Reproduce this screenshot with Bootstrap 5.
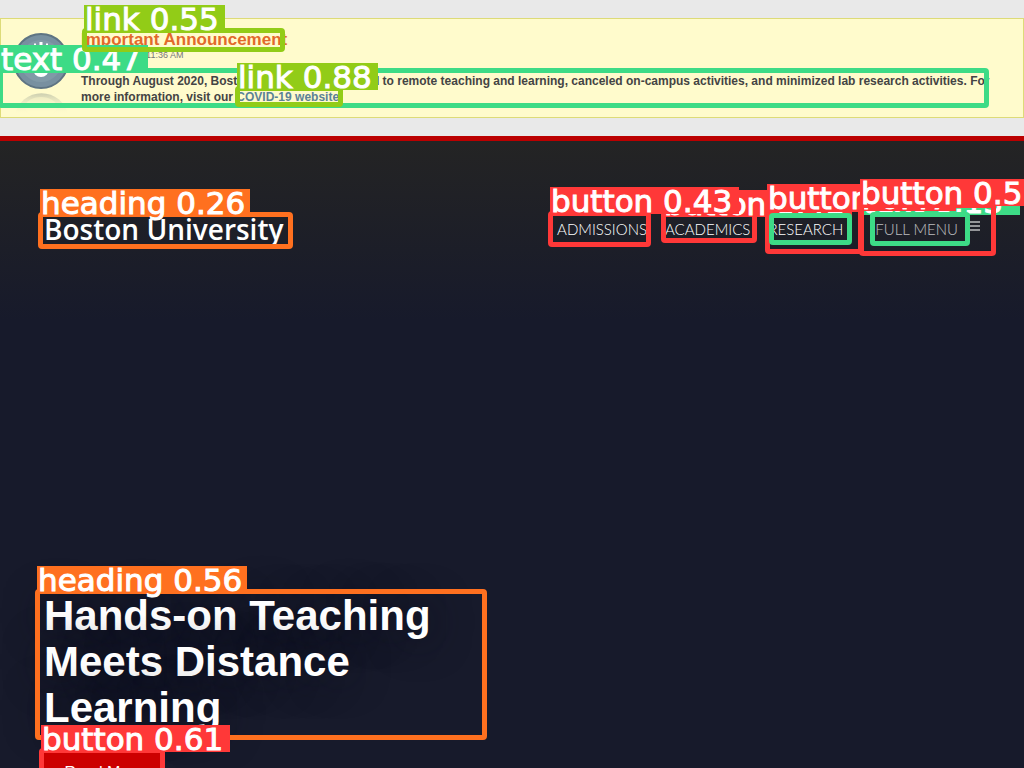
<!DOCTYPE html>
<html lang="en">
<head>
<meta charset="utf-8">
<meta name="viewport" content="width=device-width, initial-scale=1">
<title>Boston University</title>
<link href="https://cdn.jsdelivr.net/npm/bootstrap@5.3.0/dist/css/bootstrap.min.css" rel="stylesheet">
<style>
body { font-family: "Liberation Sans", Arial, sans-serif; background: #e9e9e9; }
.page { height: 100vh; min-height: 600px; }
.notice { margin: 18px 0; padding: 12px 32px 12px 12px; background: #fffbcc; border: 1px solid #dddb78; color: #444; gap: 12px; height: 100px; }
.notice h2 { font-size: 17px; line-height: 18px; font-weight: 700; margin: 0; }
.notice h2 a { color: #e2692a; }
.notice time { font-size: 9px; line-height: 12px; color: #777; margin-bottom: 12px; }
.notice p { font-size: 12px; line-height: 16px; font-weight: 700; }
.notice p a { color: #5b8296; }
.seal { width: 56px; height: 86px; }
.hero { border-top: 5px solid #bb0000; background: linear-gradient(#242424, #171a2b 180px); padding: 0 44px; color: #fff; }
.brand-name { font: 600 28px/36px "Open Sans", "Noto Sans", sans-serif; color: #fff; }
.masthead { padding-top: 70px; }
.menu { gap: 18px; }
.menu a, .menu button { font: 300 15px/20px Lato, "Open Sans", sans-serif; color: #fff; }
.menu button { opacity: .7; margin-left: 14px; gap: 6px; }
.story { margin-bottom: -26px; width: 448px; max-width: 100%; }
.story h1 { font-size: 42px; line-height: 46px; font-weight: 700; margin-bottom: 20px; text-shadow: 0 0 40px #10121e; }
.story .btn { background: #cc0000; border-radius: 0; color: #fff; width: 120px; height: 43px; font-size: 16px; }
.overlay-layer { pointer-events: none; }
.region { left: var(--x); top: var(--y); width: var(--w); height: var(--h); border: 5px solid var(--tone); border-radius: 4px; }
.tag { left: var(--x); top: var(--y); width: var(--w); height: 27px; background: var(--tone); color: #fff; font: 31px/28px "DejaVu Sans", sans-serif; white-space: nowrap; padding-left: 1px; -webkit-text-stroke: 1px #fff; }
.lime { --tone: #92cc17; } .green { --tone: #3ddb86; } .orange { --tone: #ff701f; } .red { --tone: #ff3838; }
</style>
</head>
<body>
<div class="page position-relative overflow-hidden d-flex flex-column">
  <aside class="notice d-flex flex-shrink-0">
    <svg class="seal flex-shrink-0" viewBox="0 0 56 86" aria-hidden="true">
      <defs><linearGradient id="fade" x1="0" y1="0" x2="0" y2="1"><stop offset="0" stop-color="#8c968c" stop-opacity=".45"/><stop offset="1" stop-color="#fffbcc" stop-opacity="0"/></linearGradient></defs>
      <circle cx="28" cy="30" r="27" fill="#7890a0" stroke="#5e7483" stroke-width="2"/>
      <circle cx="28" cy="30" r="21" fill="#8199a7"/>
      <path d="M21 14h2M33 14h2M28 11v4" stroke="#fff" stroke-width="3"/>
      <circle cx="28" cy="38" r="8" fill="#fff"/>
      <path d="M2 84a27 27 0 0 1 53 0z" fill="url(#fade)"/><ellipse cx="28" cy="76" rx="16" ry="10" fill="#fffbcc" opacity=".5"/>
    </svg>
    <div>
      <h2><a class="text-decoration-none" href="#">Important Announcement</a></h2>
      <time class="d-block" datetime="2020-03-22T11:36">March 22, 2020 11:36 AM</time>
      <p class="mb-0">Through August 2020, Boston University has moved to remote teaching and learning, canceled on-campus activities, and minimized lab research activities. For more information, visit our <a class="text-decoration-none" href="#">COVID-19 website</a></p>
    </div>
  </aside>
  <main class="hero flex-grow-1 d-flex flex-column overflow-hidden">
    <header class="masthead d-flex justify-content-between align-items-center">
      <a class="brand-name text-decoration-none" href="#">Boston University</a>
      <nav class="menu d-flex align-items-center">
        <a class="text-decoration-none" href="#">ADMISSIONS</a>
        <a class="text-decoration-none" href="#">ACADEMICS</a>
        <a class="text-decoration-none" href="#">RESEARCH</a>
        <button type="button" class="border-0 bg-transparent p-0 d-flex align-items-center">FULL MENU
          <svg width="16" height="18" viewBox="0 0 16 18" aria-hidden="true"><path d="M2 2h14M2 6h14M2 10h14" stroke="#fff" stroke-width="1.5"/></svg>
        </button>
      </nav>
    </header>
    <section class="story mt-auto">
      <h1>Hands-on Teaching Meets Distance Learning</h1>
      <button type="button" class="btn">Read More</button>
    </section>
  </main>
  <div class="overlay-layer position-absolute top-0 start-0 w-100 h-100">
    <div class="region green position-absolute" style="--x:-2px;--y:68px;--w:991px;--h:40px"></div>
    <div class="tag green position-absolute" style="--x:0px;--y:45px;--w:148px">text 0.47</div>
    <div class="region lime position-absolute" style="--x:82px;--y:28px;--w:203px;--h:24px"></div>
    <div class="tag lime position-absolute" style="--x:84px;--y:5px;--w:141px">link 0.55</div>
    <div class="region lime position-absolute" style="--x:235px;--y:86px;--w:108px;--h:21px"></div>
    <div class="tag lime position-absolute" style="--x:237px;--y:63px;--w:141px">link 0.88</div>
    <div class="region orange position-absolute" style="--x:38px;--y:212px;--w:255px;--h:37px"></div>
    <div class="tag orange position-absolute" style="--x:40px;--y:189px;--w:210px">heading 0.26</div>
    <div class="tag green position-absolute" style="--x:862px;--y:188px;--w:158px">text 0.13</div>
    <div class="region green position-absolute" style="--x:870px;--y:212px;--w:100px;--h:34px"></div>
    <div class="region red position-absolute" style="--x:661px;--y:211px;--w:96px;--h:32px"></div>
    <div class="tag red position-absolute" style="--x:663px;--y:190px;--w:189px">button 0.48</div>
    <div class="region red position-absolute" style="--x:548px;--y:211px;--w:103px;--h:36px"></div>
    <div class="tag red position-absolute" style="--x:550px;--y:187px;--w:189px">button 0.43</div>
    <div class="region red position-absolute" style="--x:765px;--y:207px;--w:98px;--h:47px"></div>
    <div class="region green position-absolute" style="--x:769px;--y:213px;--w:83px;--h:32px"></div>
    <div class="tag red position-absolute" style="--x:767px;--y:184px;--w:189px">button 0.47</div>
    <div class="region red position-absolute" style="--x:859px;--y:203px;--w:137px;--h:53px"></div>
    <div class="tag red position-absolute" style="--x:860px;--y:179px;--w:189px">button 0.51</div>
    <div class="region orange position-absolute" style="--x:35px;--y:589px;--w:452px;--h:151px"></div>
    <div class="tag orange position-absolute" style="--x:37px;--y:566px;--w:210px">heading 0.56</div>
    <div class="region red position-absolute" style="--x:39px;--y:748px;--w:126px;--h:60px"></div>
    <div class="tag red position-absolute" style="--x:41px;--y:725px;--w:189px">button 0.61</div>
  </div>
</div>
<script src="https://cdn.jsdelivr.net/npm/bootstrap@5.3.0/dist/js/bootstrap.bundle.min.js"></script>
</body>
</html>
